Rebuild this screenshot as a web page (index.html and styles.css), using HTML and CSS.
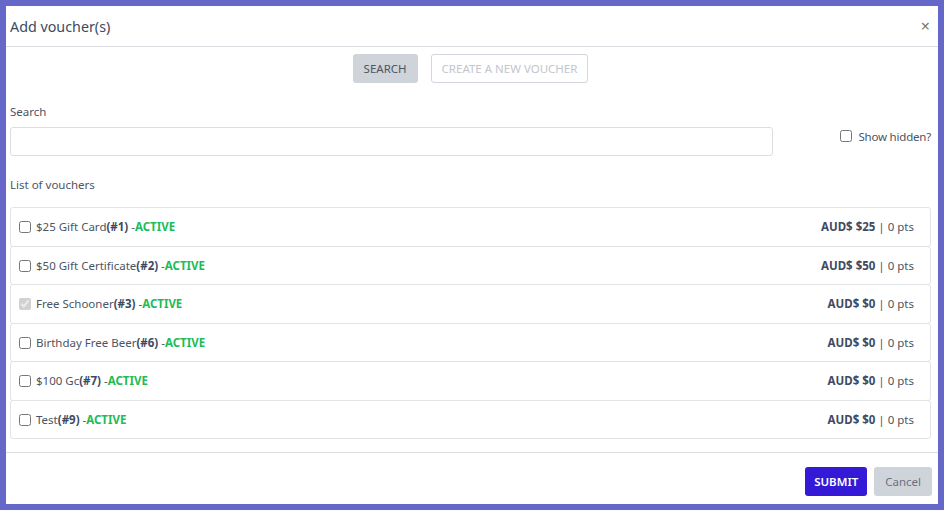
FILE: index.html
```html
<!DOCTYPE html>
<html>
  <head>
    <meta charset="UTF-8">
    <title>Add voucher(s)</title>
    <link rel="stylesheet" href="styles.css">
  </head>

  <body>
    <!-- MODAL -->
    <div class="modal">
      <div class="modal-header">
        <h2>Add voucher(s)</h2>
        <span class="close">&times;</span>
      </div>

      <div class="modal-body">
        <div class="tabs">
          <button class="btn btn-grey">SEARCH</button>
          <button class="btn btn-outline">CREATE A NEW VOUCHER</button>
        </div>

        <div class="search-row">
          <div class="search-col">
            <label for="search">Search</label>
            <input type="text" id="search" name="search">
          </div>
          <label class="show-hidden">
            <input type="checkbox"> Show hidden?
          </label>
        </div>

        <p class="list-title">List of vouchers</p>

        <ul class="voucher-list">
          <li>
            <label><input type="checkbox"> $25 Gift Card<b>(#1)</b> -<b class="active">ACTIVE</b></label>
            <span class="price"><b>AUD$ $25</b> | 0 pts</span>
          </li>
          <li>
            <label><input type="checkbox"> $50 Gift Certificate<b>(#2)</b> -<b class="active">ACTIVE</b></label>
            <span class="price"><b>AUD$ $50</b> | 0 pts</span>
          </li>
          <li>
            <label><input type="checkbox" checked disabled> Free Schooner<b>(#3)</b> -<b class="active">ACTIVE</b></label>
            <span class="price"><b>AUD$ $0</b> | 0 pts</span>
          </li>
          <li>
            <label><input type="checkbox"> Birthday Free Beer<b>(#6)</b> -<b class="active">ACTIVE</b></label>
            <span class="price"><b>AUD$ $0</b> | 0 pts</span>
          </li>
          <li>
            <label><input type="checkbox"> $100 Gc<b>(#7)</b> -<b class="active">ACTIVE</b></label>
            <span class="price"><b>AUD$ $0</b> | 0 pts</span>
          </li>
          <li>
            <label><input type="checkbox"> Test<b>(#9)</b> -<b class="active">ACTIVE</b></label>
            <span class="price"><b>AUD$ $0</b> | 0 pts</span>
          </li>
        </ul>
      </div>

      <div class="modal-footer">
        <button class="btn btn-primary">SUBMIT</button>
        <button class="btn btn-grey btn-cancel">Cancel</button>
      </div>
    </div>
  </body>
</html>
```

FILE: styles.css
```css
/* CSS styles */
html, body {
  height: 100%;
}

body {
  margin: 0;
  padding: 6px;
  box-sizing: border-box;
  background-color: #6567c9;
  font-family: "Noto Sans", Arial, sans-serif;
  font-size: 11.5px;
  color: #4b5563;
}

.modal {
  background: white;
  width: 932px;
  height: 498px;
  display: flex;
  flex-direction: column;
}

.modal-header {
  height: 40px;
  display: flex;
  align-items: center;
  justify-content: space-between;
  padding: 0 8px 0 4px;
  border-bottom: 1px solid #dcdde3;
}

.modal-header h2 {
  margin: 0;
  font-size: 14.3px;
  font-weight: normal;
  color: #3e4a61;
}

.close {
  font-size: 16px;
  color: #777;
}

.modal-body {
  padding: 0 7px 0 4px;
  flex: 1;
}

.tabs {
  display: flex;
  justify-content: center;
  gap: 13px;
  margin-top: 7px;
}

.btn {
  font-family: inherit;
  font-size: 11.5px;
  height: 29px;
  padding: 0 10px;
  border-radius: 3px;
  border: 1px solid transparent;
  cursor: pointer;
}

.btn-grey {
  background-color: #cfd3da;
  color: #4b5563;
}

.btn-outline {
  background: white;
  border-color: #d3d6dc;
  color: #c2c6cd;
}

.search-row {
  display: flex;
  align-items: center;
  justify-content: space-between;
  margin-top: 21px;
}

.search-col {
  width: 763px;
}

.search-col label {
  display: block;
  margin-bottom: 8px;
}

.search-col input {
  width: 100%;
  box-sizing: border-box;
  height: 29px;
  border: 1px solid #dadde2;
  border-radius: 3px;
}

.show-hidden {
  display: flex;
  align-items: center;
  gap: 6px;
  margin-top: 12px;
  letter-spacing: -0.2px;
}

input[type="checkbox"] {
  width: 12px;
  height: 12px;
  margin: 0;
}

.list-title {
  margin: 21px 0 15px;
}

.voucher-list {
  list-style: none;
  margin: 0;
  padding: 0;
}

.voucher-list li {
  height: 39.5px;
  box-sizing: border-box;
  border: 1px solid #e1e3e7;
  border-radius: 3px;
  margin-top: -1px;
  display: flex;
  align-items: center;
  justify-content: space-between;
  padding: 0 16px 0 8px;
}

.voucher-list li:first-child {
  margin-top: 0;
}

.voucher-list label input {
  vertical-align: -2px;
  margin-right: 2px;
}

.voucher-list b {
  color: #3e4a61;
}

.voucher-list b.active {
  color: #22bb55;
}

.modal-footer {
  border-top: 1px solid #dcdde3;
  display: flex;
  justify-content: flex-end;
  gap: 7px;
  padding: 14px 6px 8px 0;
}

.btn-primary {
  background-color: #3419d6;
  color: white;
  font-weight: 600;
  padding: 0 8px;
}

.btn-cancel {
  color: #6b7280;
}
```
